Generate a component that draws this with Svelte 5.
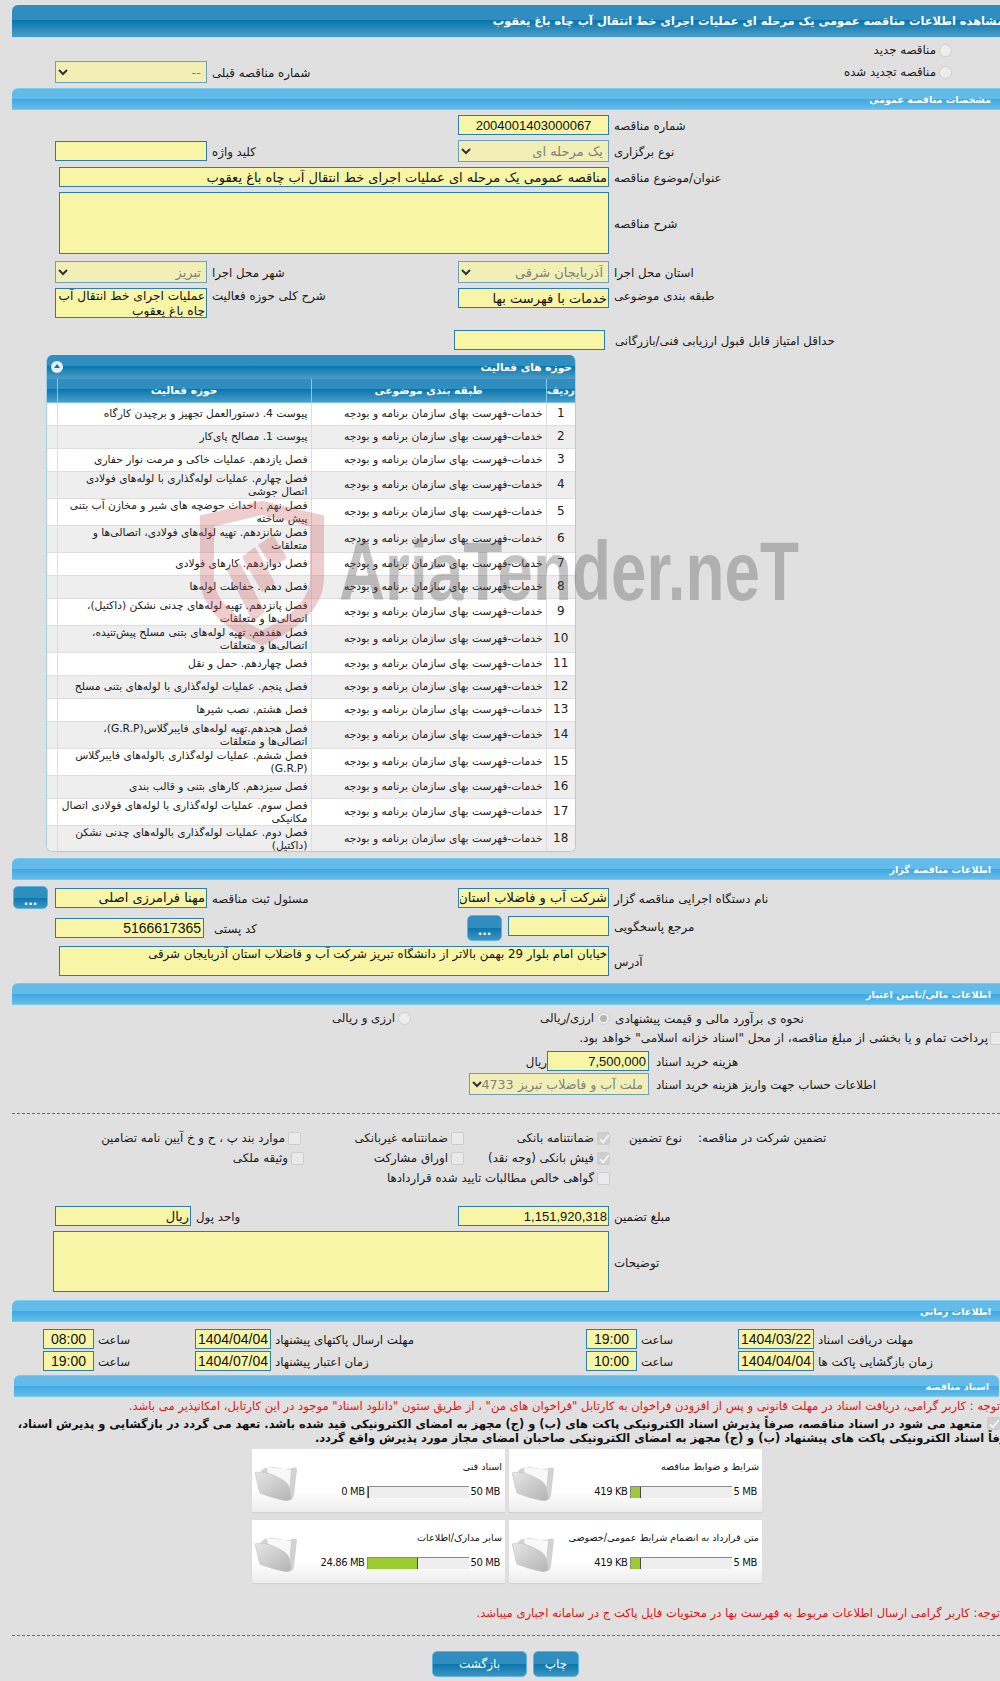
<script>
  const rows = [
    'پیوست 4. دستورالعمل تجهیز و برچیدن کارگاه',
    'پیوست 1. مصالح پای‌کار',
    'فصل یازدهم. عملیات خاکی و مرمت نوار حفاری',
    'فصل چهارم. عملیات لوله‌گذاری با لوله‌های فولادی\nاتصال جوشی',
    'فصل نهم . احداث حوضچه های شیر و مخازن آب بتنی\nپیش ساخته',
    'فصل شانزدهم. تهیه لوله‌های فولادی، اتصالی‌ها و\nمتعلقات',
    'فصل دوازدهم. کارهای فولادی',
    'فصل دهم . حفاظت لوله‌ها',
    'فصل پانزدهم. تهیه لوله‌های چدنی نشکن (داکتیل)،\nاتصالی‌ها و متعلقات',
    'فصل هفدهم. تهیه لوله‌های بتنی مسلح پیش‌تنیده،\nاتصالی‌ها و متعلقات',
    'فصل چهاردهم. حمل و نقل',
    'فصل پنجم. عملیات لوله‌گذاری با لوله‌های بتنی مسلح',
    'فصل هشتم. نصب شیرها',
    'فصل هجدهم.تهیه لوله‌های فایبرگلاس(G.R.P)،\nاتصالی‌ها و متعلقات',
    'فصل ششم. عملیات لوله‌گذاری بالوله‌های فایبرگلاس\n(G.R.P)',
    'فصل سیزدهم. کارهای بتنی و قالب بندی',
    'فصل سوم. عملیات لوله‌گذاری با لوله‌های فولادی اتصال\nمکانیکی',
    'فصل دوم. عملیات لوله‌گذاری بالوله‌های چدنی نشکن\n(داکتیل)'
  ];
  const cards = [
    { title: 'اسناد فنی', used: '0 MB', max: '50 MB', pct: 0 },
    { title: 'شرایط و ضوابط مناقصه', used: '419 KB', max: '5 MB', pct: 10 },
    { title: 'سایر مدارک/اطلاعات', used: '24.86 MB', max: '50 MB', pct: 50 },
    { title: 'متن قرارداد به انضمام شرایط عمومی/خصوصی', used: '419 KB', max: '5 MB', pct: 10 }
  ];
</script>

<div class="page">
  <div class="bar title"><span>مشاهده اطلاعات مناقصه عمومی یک مرحله ای عملیات اجرای خط انتقال آب چاه باغ یعقوب</span></div>

  <div class="radio-line"><label class="opt"><input type="radio" disabled /><span>مناقصه جدید</span></label></div>
  <div class="fr h22">
    <div class="sel"><select disabled><option>--</option></select><svg viewBox="0 0 10 7"><path d="M1 1l4 4 4-4" /></svg></div>
    <div class="l">شماره مناقصه قبلی</div>
    <div></div>
    <label class="opt prev"><input type="radio" disabled /><span>مناقصه تجدید شده</span></label>
  </div>

  <div class="bar sec m5"><span>مشخصات مناقصه عمومی</span></div>

  <div class="fr h20 m5">
    <div></div><div></div>
    <input class="i center" readonly value="2004001403000067" />
    <div class="l">شماره مناقصه</div>
  </div>
  <div class="fr h22 m5">
    <input class="i short" readonly value="" />
    <div class="l">کلید واژه</div>
    <div class="sel"><select disabled><option>یک مرحله ای</option></select><svg viewBox="0 0 10 7"><path d="M1 1l4 4 4-4" /></svg></div>
    <div class="l">نوع برگزاری</div>
  </div>
  <div class="wide h20 m5">
    <input class="i big" readonly value="مناقصه عمومی یک مرحله ای عملیات اجرای خط انتقال آب چاه باغ یعقوب" />
    <div class="l">عنوان/موضوع مناقصه</div>
  </div>
  <div class="wide h62 m5">
    <textarea class="i" readonly></textarea>
    <div class="l">شرح مناقصه</div>
  </div>
  <div class="fr h22 m7">
    <div class="sel"><select disabled><option>تبریز</option></select><svg viewBox="0 0 10 7"><path d="M1 1l4 4 4-4" /></svg></div>
    <div class="l">شهر محل اجرا</div>
    <div class="sel"><select disabled><option>آذربایجان شرقی</option></select><svg viewBox="0 0 10 7"><path d="M1 1l4 4 4-4" /></svg></div>
    <div class="l">استان محل اجرا</div>
  </div>
  <div class="fr h30 m5">
    <textarea class="i big tight" readonly>عملیات اجرای خط انتقال آب چاه باغ یعقوب</textarea>
    <div class="l top">شرح کلی حوزه فعالیت</div>
    <input class="i big toprow" readonly value="خدمات با فهرست بها" />
    <div class="l top">طبقه بندی موضوعی</div>
  </div>
  <div class="score h20 m12">
    <input class="i" readonly value="" />
    <div class="l">حداقل امتیاز قابل قبول ارزیابی فنی/بازرگانی</div>
  </div>

  <div class="panel">
    <div class="phead">
      <i class="collapse"></i>
      <span class="ptitle">حوزه های فعالیت</span>
    </div>
    <table>
      <thead>
        <tr><th></th><th>حوزه فعالیت</th><th>طبقه بندی موضوعی</th><th>ردیف</th></tr>
      </thead>
      <tbody>
        {#each rows as r, i}
          <tr class:double={r.includes('\n')}>
            <td></td>
            <td class="act">{r}</td>
            <td class="cat">خدمات-فهرست بهای سازمان برنامه و بودجه</td>
            <td class="num">{i + 1}</td>
          </tr>
        {/each}
      </tbody>
    </table>
  </div>

  <div class="bar sec m6"><span>اطلاعات مناقصه گزار</span></div>

  <div class="btnrow h23 m6">
    <button class="btn dots">...</button>
    <input class="i big short" readonly value="مهنا فرامرزی اصلی" />
    <div class="l">مسئول ثبت مناقصه</div>
    <input class="i big short" readonly value="شرکت آب و فاضلاب استان آذربایجان شرقی" />
    <div class="l">نام دستگاه اجرایی مناقصه گزار</div>
  </div>
  <div class="post h26 m6">
    <input class="i code" readonly value="5166617365" />
    <div class="l zip">کد پستی</div>
    <button class="btn dots">...</button>
    <input class="i short ref" readonly value="" />
    <div class="l reflabel">مرجع پاسخگویی</div>
  </div>
  <div class="wide h30 m5">
    <textarea class="i big addr" readonly>خیابان امام بلوار 29 بهمن بالاتر از دانشگاه تبریز شرکت آب و فاضلاب استان آذربایجان شرقی</textarea>
    <div class="l">آدرس</div>
  </div>

  <div class="bar sec m7"><span>اطلاعات مالی/تامین اعتبار</span></div>

  <div class="estimate h20 m3">
    <label class="opt"><input type="radio" disabled /><span>ارزی و ریالی</span></label>
    <label class="opt"><input type="radio" disabled checked /><span>ارزی/ریالی</span></label>
    <div class="l">نحوه ی برآورد مالی و قیمت پیشنهادی</div>
  </div>
  <div class="radio-line treasury"><label class="opt"><input type="checkbox" disabled /><span>پرداخت تمام و یا بخشی از مبلغ مناقصه، از محل "اسناد خزانه اسلامی" خواهد بود.</span></label></div>
  <div class="cost h20 m3">
    <div class="l unit">ریال</div>
    <input class="i" readonly value="7,500,000" />
    <div class="l">هزینه خرید اسناد</div>
  </div>
  <div class="acct h22 m2">
    <div class="sel acctsel"><select disabled><option>ملت آب و فاضلاب تبریز 4733</option></select><svg viewBox="0 0 10 7"><path d="M1 1l4 4 4-4" /></svg></div>
    <div class="l">اطلاعات حساب جهت واریز هزینه خرید اسناد</div>
  </div>

  <div class="dash m18"></div>

  <div class="guar">
    <div class="g-grid">
      <label class="opt"><input type="checkbox" disabled /><span>موارد بند پ ، ح و خ آیین نامه تضامین</span></label>
      <label class="opt"><input type="checkbox" disabled /><span>ضمانتنامه غیربانکی</span></label>
      <label class="opt"><input type="checkbox" disabled checked /><span>ضمانتنامه بانکی</span></label>
      <label class="opt nudge"><input type="checkbox" disabled /><span>وثیقه ملکی</span></label>
      <label class="opt"><input type="checkbox" disabled /><span>اوراق مشارکت</span></label>
      <label class="opt"><input type="checkbox" disabled checked /><span>فیش بانکی (وجه نقد)</span></label>
      <div></div>
      <div></div>
      <label class="opt wideopt"><input type="checkbox" disabled /><span>گواهی خالص مطالبات تایید شده قراردادها</span></label>
    </div>
    <div class="l gtype">نوع تضمین</div>
    <div class="l gtitle">تضمین شرکت در مناقصه:</div>
  </div>

  <div class="fr2 h20 m18">
    <input class="i big" readonly value="ریال" />
    <div class="l">واحد پول</div>
    <input class="i" readonly value="1,151,920,318" />
    <div class="l">مبلغ تضمین</div>
  </div>
  <div class="note h61 m5">
    <textarea class="i" readonly></textarea>
    <div class="l">توضیحات</div>
  </div>

  <div class="bar sec m8"><span>اطلاعات زمانی</span></div>

  <div class="time h20 m7">
    <input class="i big c" readonly value="08:00" />
    <div class="l">ساعت</div>
    <input class="i big c" readonly value="1404/04/04" />
    <div class="l">مهلت ارسال پاکتهای پیشنهاد</div>
    <input class="i big c" readonly value="19:00" />
    <div class="l">ساعت</div>
    <input class="i big c" readonly value="1404/03/22" />
    <div class="l">مهلت دریافت اسناد</div>
  </div>
  <div class="time h20 m2">
    <input class="i big c" readonly value="19:00" />
    <div class="l">ساعت</div>
    <input class="i big c" readonly value="1404/07/04" />
    <div class="l">زمان اعتبار پیشنهاد</div>
    <input class="i big c" readonly value="10:00" />
    <div class="l">ساعت</div>
    <input class="i big c" readonly value="1404/04/04" />
    <div class="l">زمان بازگشایی پاکت ها</div>
  </div>

  <div class="bar sec docs m4"><span>اسناد مناقصه</span></div>

  <p class="red first">توجه : کاربر گرامی، دریافت اسناد در مهلت قانونی و پس از افزودن فراخوان به کارتابل "فراخوان های من" ، از طریق ستون "دانلود اسناد" موجود در این کارتابل، امکانپذیر می باشد.</p>
  <div class="pledge">
    <input type="checkbox" disabled checked />
    <div>متعهد می شود در اسناد مناقصه، صرفاً پذیرش اسناد الکترونیکی پاکت های (ب) و (ج) مجهز به امضای الکترونیکی قید شده باشد. تعهد می گردد در بازگشایی و پذیرش اسناد،</div>
  </div>
  <div class="pledge second">صرفاً اسناد الکترونیکی پاکت های پیشنهاد (ب) و (ج) مجهز به امضای الکترونیکی صاحبان امضای مجاز مورد پذیرش واقع گردد.</div>

  <div class="cards">
    {#each cards as c}
      <div class="card">
        <svg class="folder" viewBox="0 0 42 38">
          <defs>
            <linearGradient id="fg" x1="0" y1="0" x2="1" y2="1"><stop offset="0" stop-color="#e6e6e6" /><stop offset="1" stop-color="#b4b4b4" /></linearGradient>
          </defs>
          <path d="M6 8 C12 2 20 4 28 6 C34 8 40 2 42 6 L39 32 C38 37 36 38 33 36 L8 18 Z" fill="#d2d2d2" />
          <path d="M12 4 L36 7 L34 30 L14 20 Z" fill="#f8f8f8" />
          <path d="M0 10 C6 8 14 10 20 13 C26 16 32 18 34 24 L36 34 C36 38 32 38 28 37 C18 35 10 32 5 30 C3 24 2 16 0 10 Z" fill="url(#fg)" stroke="#bdbdbd" stroke-width=".6" />
        </svg>
        <div class="cbody">
          <div class="ctitle">{c.title}</div>
          <div class="cbar">
            <span>{c.used}</span>
            <div class="track"><div class="fill" style="width:{c.pct}%"></div></div>
            <span>{c.max}</span>
          </div>
        </div>
      </div>
    {/each}
  </div>

  <p class="red last">توجه: کاربر گرامی ارسال اطلاعات مربوط به فهرست بها در محتویات فایل پاکت ج در سامانه اجباری میباشد.</p>
  <div class="dash m15"></div>
  <div class="actions">
    <button class="btn back">بازگشت</button>
    <button class="btn print">چاپ</button>
  </div>

  <svg class="mark-shield" viewBox="0 0 126 150">
    <path class="sh" d="M8 21 L63 8 L118 21 V78 C118 108 86 128 63 138 C40 128 8 108 8 78 Z" />
    <path class="ch" d="M59 45 L74 35 L88 58 L73 67 Z" />
    <path class="ch" d="M43 57 L56 47 L76 83 L63 92 Z" />
    <path class="ch" d="M28 70 L41 63 L66 112 L54 122 Z" />
  </svg>
  <div class="mark-text">AriaTender.neT</div>
</div>

<style>
  :global(body) { margin: 0; background: #e0e0e0; }
  .page {
    position: relative;
    width: 1000px;
    height: 1681px;
    overflow: hidden;
    padding-top: 5px;
    box-sizing: border-box;
    background: #e0e0e0;
    color: #1a1a1a;
    font: 11.8px/14px "DejaVu Sans", sans-serif;
  }
  .m2 { margin-top: 2px; } .m3 { margin-top: 3px; } .m4 { margin-top: 4px; } .m5 { margin-top: 5px; }
  .m6 { margin-top: 6px; } .m7 { margin-top: 7px; } .m8 { margin-top: 8px; } .m12 { margin-top: 12px; }
  .m15 { margin-top: 15px; } .m18 { margin-top: 18px; }
  .h20 { height: 20px; } .h22 { height: 22px; } .h23 { height: 23px; } .h26 { height: 26px; }
  .h30 { height: 30px; } .h61 { height: 61px; } .h62 { height: 62px; }

  .bar { margin-left: 12px; box-sizing: border-box; direction: rtl; color: #fff; font-weight: bold; white-space: nowrap; border-top-left-radius: 6px; }
  .title {
    height: 32px;
    margin-right: -4px;
    line-height: 33px;
    font-size: 11.4px;
    background: linear-gradient(#2f8ebf 0, #2f8ebf 50%, #0876ad 50%, #4d9cc5 100%);
    border-bottom: 1px solid #2f9be6;
  }
  .sec {
    height: 22px;
    line-height: 21px;
    padding-right: 9px;
    font-size: 9.6px;
    background: linear-gradient(#62bbe9 0, #62bbe9 50%, #3ea8e2 50%, #66bde9 100%);
    border-top: 1px solid #74cdf0;
    border-bottom: 1px solid #74cdf0;
  }
  .docs { margin-left: 14px; margin-right: 1px; padding-right: 10px; border-top-right-radius: 6px; }

  .l { direction: rtl; text-align: left; white-space: nowrap; align-self: center; padding-left: 5px; padding-top: 2px; }
  .l.top { align-self: start; padding-top: 1px; }

  .i {
    display: block;
    box-sizing: border-box;
    width: 100%;
    height: 100%;
    margin: 0;
    padding: 0 1px;
    background: #f8f6a6;
    border: 1px solid #2b7cb3;
    border-radius: 0;
    outline: 0;
    resize: none;
    direction: rtl;
    color: #111;
    font: 13px/15px "Liberation Sans", "DejaVu Sans", sans-serif;
  }
  .i.big { font-family: "DejaVu Sans", sans-serif; font-size: 13px; line-height: 15px; }
  .i.tight { font-size: 12.2px; }
  .i.addr { font-size: 11.8px; }
  .i.center { text-align: center; }
  .i.c { text-align: center; direction: ltr; font-family: "Liberation Sans", sans-serif; font-size: 14px; padding: 0; }
  .short { height: 20px; align-self: center; }
  .i.toprow { height: 20px; }
  textarea.i { overflow: hidden; }

  .sel { position: relative; height: 100%; min-height: 0; }
  .sel select {
    display: block;
    box-sizing: border-box;
    width: 100%;
    height: 100%;
    margin: 0;
    padding: 0 5px 0 12px;
    appearance: none;
    background: #f1efb6;
    border: 1px solid #6f9fbd;
    border-radius: 0;
    opacity: 1;
    direction: rtl;
    color: #808080;
    font: 13px "DejaVu Sans", sans-serif;
  }
  .acctsel select { font-size: 12.6px; padding: 0 5px 0 11px; }
  .sel svg { position: absolute; left: 3px; top: 8px; width: 10px; height: 7px; }
  .sel path { fill: none; stroke: #333; stroke-width: 2; }

  .fr, .fr2, .wide, .score, .btnrow, .post, .estimate, .cost, .acct, .note, .time { grid-template-rows: minmax(0, 1fr); }
  .fr { display: grid; grid-template-columns: 152px 251px 151px 1fr; margin-left: 55px; }
  .fr2 { display: grid; grid-template-columns: 136px 267px 151px 1fr; margin-left: 55px; }
  .wide { display: grid; grid-template-columns: 550px 1fr; margin-left: 59px; }
  .score { display: grid; grid-template-columns: 151px 1fr; margin-left: 454px; }
  .score .l { padding-left: 10px; }
  .btnrow { display: grid; grid-template-columns: 35px 7px 152px 251px 151px 1fr; margin-left: 13px; }
  .btnrow .btn { grid-column: 1; }
  .btnrow input:nth-of-type(1) { grid-column: 3; }
  .post { display: grid; grid-template-columns: 149px 263px 35px 6px 101px 1fr; margin-left: 55px; }
  .post .code { grid-column: 1; height: 20px; align-self: center; direction: rtl; font-size: 14px; padding-right: 2px; }
  .post .btn { grid-column: 3; }
  .post .ref { grid-column: 5; align-self: start; margin-top: 1px; }
  .post .reflabel { grid-column: 6; align-self: start; margin-top: 3px; }
  .post .zip { grid-column: 2; padding-left: 10px; }

  .opt { display: flex; direction: rtl; align-items: center; gap: 3px; white-space: nowrap; }
  input[type='radio'], input[type='checkbox'] {
    appearance: none;
    flex: none;
    margin: 0;
    width: 13px;
    height: 13px;
    background: #eaeaea;
    border: 1px solid #cdcdcd;
    box-sizing: border-box;
    position: relative;
  }
  input[type='radio'] { border-radius: 50%; background: #ededed; }
  input[type='radio']:checked::after {
    content: '';
    position: absolute;
    inset: 2px;
    border-radius: 50%;
    background: #b5b5b5;
  }
  input[type='checkbox'] { border-radius: 2px; }
  input[type='checkbox']:checked { background: #cfcfcf; }
  input[type='checkbox']:checked::after {
    content: '';
    position: absolute;
    left: 4px;
    top: 0;
    width: 3px;
    height: 8px;
    border: solid #f2f2f2;
    border-width: 0 2px 2px 0;
    transform: rotate(40deg);
  }
  .radio-line { height: 22px; margin-top: 2px; display: flex; direction: rtl; align-items: center; padding-right: 48px; }
  .prev { grid-column: 4; justify-self: end; margin-right: 48px; }
  .estimate { display: grid; grid-template-columns: 75px 199px 1fr; margin-left: 336px; }
  .estimate .l { font-size: 12px; }
  .treasury { height: 20px; margin-top: 0; padding-right: 0; margin-right: -3px; font-size: 12px; }
  .treasury .opt { gap: 2px; }
  .cost { display: grid; grid-template-columns: 20px 102px 1fr; margin-left: 527px; }
  .cost .i { text-align: right; font-size: 13px; font-weight: normal; padding-right: 2px; }
  .cost .unit { padding-left: 0; }
  .cost .l:last-child { padding-left: 7px; }
  .acct { display: grid; grid-template-columns: 180px 1fr; margin-left: 469px; }
  .acct .l { padding-left: 7px; }
  .dash { margin-left: 12px; border-top: 1px dashed #2b7cb3; }

  .guar { display: grid; grid-template-columns: 610px 20px 52px 16px 1fr; margin-top: 14px; height: 60px; }
  .g-grid { display: grid; grid-template-columns: 304px 160px 146px; grid-auto-rows: 20px; }
  .g-grid .opt { justify-self: end; }
  .g-grid .opt:nth-child(1) { margin-right: 3px; }
  .g-grid .opt.nudge { margin-right: 0; }
  .wideopt { grid-column: 3; }
  .gtype { grid-column: 3; padding: 0; align-self: start; margin-top: 3px; }
  .gtitle { grid-column: 5; padding: 0; align-self: start; margin-top: 3px; }

  .note { display: grid; grid-template-columns: 556px 1fr; margin-left: 53px; }

  .time { display: grid; grid-template-columns: 51px 101px 76px 315px 51px 101px 76px 1fr; margin-left: 43px; }
  .time .l { padding-left: 4px; }

  .red { margin: 0; direction: rtl; white-space: nowrap; color: #e81010; font-size: 11.6px; line-height: 14px; }
  .first { margin-top: 2px; }
  .last { margin-top: 23px; }
  .pledge { display: flex; direction: rtl; align-items: flex-start; gap: 5px; margin-top: 4px; white-space: nowrap; font-weight: bold; font-size: 11.45px; line-height: 14px; color: #111; }
  .pledge.second { margin-top: 0; margin-right: -18px; }

  .cards { display: grid; grid-template-columns: 253px 253px; gap: 8px 4px; margin: 4px 0 0 252px; width: 510px; }
  .card {
    position: relative;
    display: flex;
    height: 63px;
    background: linear-gradient(#fff 0, #fff 65%, #ededed 100%);
    box-shadow: 0 1px 1px #d2d2d2;
  }
  .folder { position: absolute; left: 3px; top: 14px; width: 42px; height: 38px; }
  .cbody { flex: 1; display: flex; flex-direction: column; min-width: 0; }
  .ctitle { direction: rtl; padding: 11px 3px 0 0; font-size: 9.6px; height: 26px; box-sizing: border-box; white-space: nowrap; line-height: 13px; color: #111; }
  .cbar { display: flex; justify-content: flex-end; gap: 2px; margin-top: 11px; padding-right: 5px; font: 10px/12px "DejaVu Sans", sans-serif; color: #111; align-items: center; letter-spacing: -.4px; }
  .track { width: 102px; height: 12px; box-sizing: border-box; background: #eee; border-top: 1px solid #8a8a8a; border-left: 1px solid #8a8a8a; }
  .fill { height: 100%; box-sizing: border-box; background: #9bcb30; border-right: 1px solid #444; min-width: 1px; }

  .panel {
    box-sizing: border-box;
    width: 530px;
    height: 497px;
    margin: 5px 0 0 46px;
    background: #fff;
    border: 1px solid #a3cfe9;
    border-top: 0;
    border-radius: 6px;
    overflow: hidden;
  }
  .phead {
    display: flex;
    justify-content: space-between;
    align-items: center;
    height: 24px;
    padding: 0 3px 0 4px;
    color: #fff;
    font-weight: bold;
    font-size: 10.6px;
    background: linear-gradient(#2f8ebf 0, #2f8ebf 45%, #0876ad 45%, #4d9cc5 100%);
  }
  .ptitle { direction: rtl; white-space: nowrap; }
  .collapse { position: relative; width: 12px; height: 12px; border-radius: 50%; background: #e6eff5; }
  .collapse::after {
    content: '';
    position: absolute;
    left: 3px;
    top: 3px;
    border: 3px solid transparent;
    border-top: 0;
    border-bottom: 4px solid #0876ad;
  }
  table { width: 528px; border-collapse: collapse; table-layout: fixed; }
  th:nth-child(1) { width: 10px; }
  th:nth-child(2) { width: 254px; }
  th:nth-child(3) { width: 235px; }
  th {
    height: 23px;
    padding: 0;
    box-sizing: border-box;
    color: #fff;
    font-size: 10.6px;
    font-weight: bold;
    direction: rtl;
    background: linear-gradient(#2f8ebf 0, #2f8ebf 45%, #0876ad 45%, #4d9cc5 100%);
    border-right: 1px solid #85cdf0;
    border-bottom: 1px solid #6fc4ec;
  }
  th:last-child { border-right: 0; }
  td {
    height: 23px;
    padding: 0 3px;
    box-sizing: border-box;
    direction: rtl;
    text-align: right;
    font-size: 10.7px;
    line-height: 13px;
    color: #222;
    border-right: 1px solid #dedede;
    border-bottom: 1px solid #dedede;
    white-space: pre;
    overflow: hidden;
  }
  td:last-child { border-right: 0; }
  .double td { height: 27px; }
  tbody tr:nth-child(even) td { background: #eee; }
  .num { text-align: center; font-size: 12px; padding: 0; }

  .btn {
    box-sizing: border-box;
    width: 100%;
    height: 100%;
    margin: 0;
    padding: 0;
    color: #fff;
    font: bold 12px "DejaVu Sans", sans-serif;
    background: linear-gradient(#2f8ebf 0, #2f8ebf 50%, #0876ad 50%, #3f95c2 100%);
    border: 1px solid #58b6e4;
    border-radius: 5px;
  }
  .dots { line-height: 12px; padding-top: 6px; }
  .actions { display: flex; gap: 6px; margin: 15px 0 0 432px; height: 26px; }
  .back { width: 95px; font-weight: normal; }
  .print { width: 46px; font-weight: normal; }

  .mark-shield { position: absolute; left: 199px; top: 500px; width: 126px; height: 150px; pointer-events: none; }
  .sh { fill: none; stroke: #c95a5c; stroke-width: 14; opacity: .3; }
  .ch { fill: #c95a5c; opacity: .3; }
  .mark-text {
    position: absolute;
    left: 339px;
    top: 521px;
    color: #555;
    opacity: .34;
    font: bold 84px/100px "Liberation Sans", sans-serif;
    white-space: nowrap;
    transform: scaleX(.76);
    transform-origin: 0 0;
    pointer-events: none;
  }
</style>
